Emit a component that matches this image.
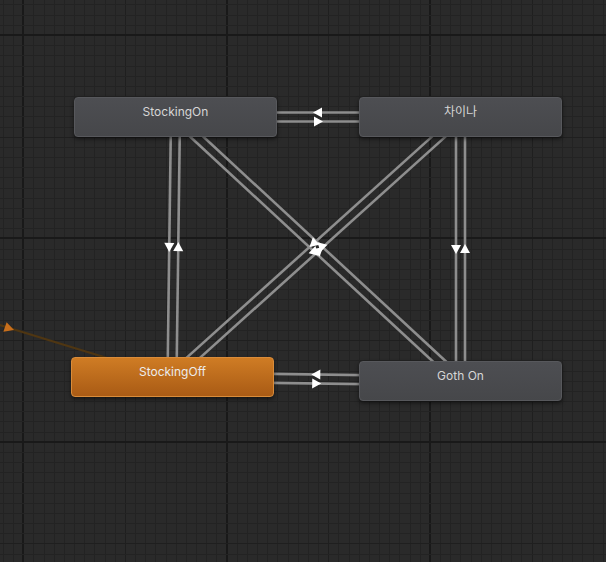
import React from "react";

const C = {
  A: [175.5, 117],
  B: [460.5, 117],
  C: [172, 377],
  D: [460.5, 381],
};

const pairs = [
  ["A", "B"], ["B", "A"], ["C", "D"], ["D", "C"],
  ["A", "C"], ["C", "A"], ["B", "D"], ["D", "B"],
  ["A", "D"], ["D", "A"], ["B", "C"], ["C", "B"],
];

function Grid() {
  const xs = [];
  const ys = [];
  const step = 10.1667;
  for (let i = -3; i < 62; i++) {
    const x = 23.33 + i * step;
    if (x < -2 || x > 610) continue;
    xs.push({ v: x, lvl: ((i % 20) + 20) % 20 === 0 ? 2 : ((i % 10) + 10) % 10 === 0 ? 1 : 0 });
  }
  for (let i = -4; i < 60; i++) {
    const y = 35 + i * step;
    if (y < -2 || y > 566) continue;
    ys.push({ v: y, lvl: ((i % 20) + 20) % 20 === 0 ? 2 : ((i % 10) + 10) % 10 === 0 ? 1 : 0 });
  }
  const col = ["#232323", "#1f1f1f", "#191919"];
  const wd = [1, 1, 2];
  return (
    <g>
      {xs.map((l, k) => (
        <line key={"x" + k} x1={Math.round(l.v) + (l.lvl === 2 ? 0 : 0.5)} x2={Math.round(l.v) + (l.lvl === 2 ? 0 : 0.5)} y1={0} y2={562} stroke={col[l.lvl]} strokeWidth={wd[l.lvl]} />
      ))}
      {ys.map((l, k) => (
        <line key={"y" + k} y1={Math.round(l.v) + (l.lvl === 2 ? 0 : 0.5)} y2={Math.round(l.v) + (l.lvl === 2 ? 0 : 0.5)} x1={0} x2={606} stroke={col[l.lvl]} strokeWidth={wd[l.lvl]} />
      ))}
    </g>
  );
}

function Transitions() {
  const off = 4.5;
  return (
    <g>
      {pairs.map(([a, b], k) => {
        const [x1, y1] = C[a];
        const [x2, y2] = C[b];
        const dx = x2 - x1;
        const dy = y2 - y1;
        const len = Math.hypot(dx, dy);
        const ux = dx / len;
        const uy = dy / len;
        const px = -uy * off;
        const py = ux * off;
        const sx = x1 + px, sy = y1 + py, ex = x2 + px, ey = y2 + py;
        return (
          <line key={k} x1={sx} y1={sy} x2={ex} y2={ey} stroke="#8e8e8e" strokeWidth={2.6} />
        );
      })}
      {pairs.map(([a, b], k) => {
        const [x1, y1] = C[a];
        const [x2, y2] = C[b];
        const dx = x2 - x1;
        const dy = y2 - y1;
        const len = Math.hypot(dx, dy);
        const ux = dx / len;
        const uy = dy / len;
        const nx = -uy, ny = ux;
        const mx = (x1 + x2) / 2 + nx * off;
        const my = (y1 + y2) / 2 + ny * off;
        const tip = [mx + ux * 5, my + uy * 5];
        const b1 = [mx - ux * 4 + nx * 5, my - uy * 4 + ny * 5];
        const b2 = [mx - ux * 4 - nx * 5, my - uy * 4 - ny * 5];
        return (
          <polygon key={"a" + k} points={`${tip[0]},${tip[1]} ${b1[0]},${b1[1]} ${b2[0]},${b2[1]}`} fill="#ffffff" />
        );
      })}
    </g>
  );
}

function Node({ className, label, orange }) {
  const base =
    "absolute h-[40px] w-[203px] rounded-[4px] border text-center text-[12px] leading-[15px] pt-[6px] font-['Inter','Noto_Sans_CJK_KR',sans-serif] shadow-[0_2px_4px_rgba(0,0,0,0.55)]";
  const skin = orange
    ? "border-[#d98c3a] bg-gradient-to-b from-[#cf7c24] to-[#a95b15] text-[#ececec]"
    : "border-[#57585c] bg-gradient-to-b from-[#4d4e52] to-[#46474a] text-[#d6d6d6]";
  return <div className={`${base} ${skin} ${className}`}>{label}</div>;
}

export default function App() {
  return (
    <div className="relative h-[562px] w-[606px] overflow-hidden bg-[#2a2a2a]">
      <svg className="absolute left-0 top-0" width="606" height="562" viewBox="0 0 606 562">
        <Grid />
        <line x1={-10} y1={322} x2={172} y2={378} stroke="#4f3612" strokeWidth={2.2} />
        <polygon points="3.4,331.7 6.6,322.3 14,330" fill="#c86f1c" />
        <Transitions />
      </svg>
      <Node className="left-[74px] top-[97px]" label="StockingOn" />
      <Node className="left-[359px] top-[97px]" label="차이나" />
      <Node className="left-[71px] top-[357px] w-[202px]" label="StockingOff" orange />
      <Node className="left-[359px] top-[361px]" label="Goth On" />
    </div>
  );
}
